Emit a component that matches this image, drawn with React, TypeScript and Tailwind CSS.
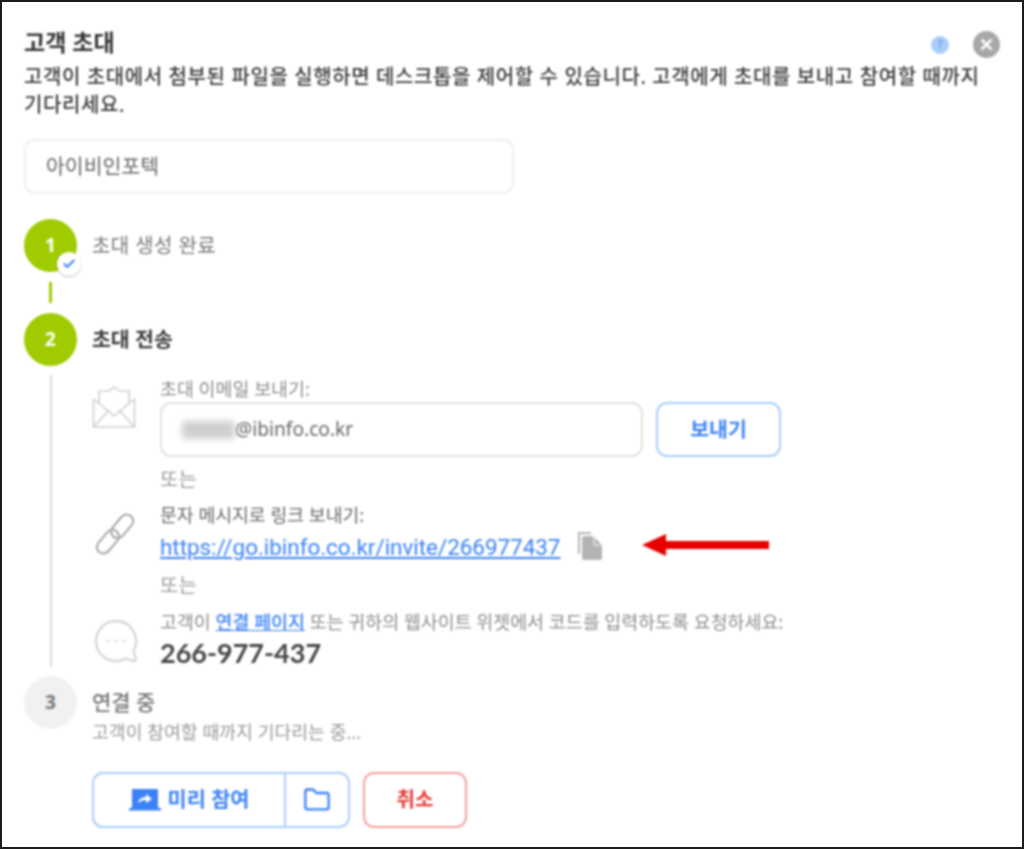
import { Check, Folder, MessageCircleMore, X } from "lucide-react";

const KR = "font-['Noto_Sans','Noto_Sans_CJK_KR',sans-serif]";

function StepCircle({ n, done }: { n: number; done?: boolean }) {
  const pending = n === 3;
  return (
    <div
      className={`relative flex h-[53px] w-[53px] shrink-0 items-center justify-center rounded-full text-[19px] font-bold ${pending ? "bg-[#f1f1f1] text-[#777]" : "bg-[#a0cb00] text-white"}`}
    >
      {n}
      {done && (
        <span className="absolute left-[33px] top-[33px] flex h-[24px] w-[24px] items-center justify-center rounded-full bg-white shadow-[0_1px_2px_rgba(0,0,0,0.25)]">
          <Check className="h-[14px] w-[14px] text-[#3b82f6]" strokeWidth={3.5} />
        </span>
      )}
    </div>
  );
}

function EnvelopeIcon() {
  return (
    <svg width="44" height="44" viewBox="0 0 44 44" fill="none" stroke="#cfcfcf" strokeWidth="1.6" className="mt-[8px] shrink-0">
      <path d="M1.5 14v28h41V14" />
      <path d="M1.5 42 17 25M42.5 42 27 25" />
      <path d="M1.5 14 22 31l20.5-17" />
      <path d="M7 18V6h10l5-4 5 4h10v12" />
    </svg>
  );
}

function ChainIcon() {
  return (
    <svg width="46" height="46" viewBox="0 0 46 46" fill="none" stroke="#a6a6a6" strokeWidth="2" className="mt-[8px] shrink-0">
      <g transform="rotate(-50 23 23)">
        <rect x="-1" y="16" width="27" height="13" rx="6.5" />
        <rect x="20" y="17" width="27" height="13" rx="6.5" />
      </g>
    </svg>
  );
}

function CopyIcon() {
  return (
    <svg width="26" height="29" viewBox="0 0 26 29" className="shrink-0 text-[#b4b4b4]">
      <path d="M1 1h13v2H3v20H1z" fill="currentColor" />
      <path d="M7 5h9l9 9v13a2 2 0 0 1-2 2H7a2 2 0 0 1-2-2V7a2 2 0 0 1 2-2z" fill="currentColor" />
      <path d="M17 5v9h8" fill="none" stroke="#fff" strokeWidth="1" />
    </svg>
  );
}

function LaptopIcon() {
  return (
    <svg width="32" height="24" viewBox="0 0 32 24" className="shrink-0">
      <path d="M4 1h24a1 1 0 0 1 1 1v18H3V2a1 1 0 0 1 1-1z" fill="#3b82f6" />
      <path d="M0 20h32v2.5H0z" fill="#3b82f6" />
      <path d="M9 15c1-4 4-6 8-6V6l6 5-6 4v-3c-3 0-5 1-8 3z" fill="#fff" />
    </svg>
  );
}

export default function App() {
  return (
    <div className={`relative h-[849px] w-[1024px] overflow-hidden border-2 border-[#1c1c1c] bg-white ${KR}`}>
      <div className="blur-[0.9px]">
        <div className="absolute right-[22px] top-[29px] flex items-center gap-[24px]">
          <span className="flex h-[18px] w-[18px] items-center justify-center rounded-full bg-[#a9cdfb] text-[11px] font-bold text-[#6f9fdc]">?</span>
          <span className="flex h-[27px] w-[27px] items-center justify-center rounded-full bg-[#a8a8a8]">
            <X className="h-[17px] w-[17px] text-white" strokeWidth={3.5} />
          </span>
        </div>

        <div className="px-[22px] pt-[24px]">
          <h1 className="text-[23px] font-bold leading-[32px] text-[#333]">고객 초대</h1>
          <p className="mt-[5px] w-[970px] text-[20px] font-medium leading-[28px] tracking-[0.6px] text-[#3a3a3a]">
            고객이 초대에서 첨부된 파일을 실행하면 데스크톱을 제어할 수 있습니다. 고객에게 초대를 보내고 참여할 때까지 기다리세요.
          </p>

          <div className="mt-[20px] flex h-[55px] w-[490px] items-center rounded-[11px] border-2 border-[#efefef] px-[20px] text-[20.5px] text-[#666]">
            아이비인포텍
          </div>

          {/* step 1 */}
          <div className="mt-[25px] flex gap-[15px]">
            <StepCircle n={1} done />
            <div className="pt-[14px] text-[20px] leading-[26px] tracking-[0.4px] text-[#777]">초대 생성 완료</div>
          </div>
          <div className="ml-[25px] mt-[10px] h-[21px] w-[3px] bg-[#a0cb00]" />

          {/* step 2 */}
          <div className="mt-[10px] flex gap-[15px]">
            <div className="flex w-[53px] shrink-0 flex-col items-center">
              <StepCircle n={2} />
              <div className="mb-[4px] mt-[9px] w-[2px] flex-1 bg-[#dcdcdc]" />
            </div>
            <div className="w-[700px]">
              <div className="pt-[13px] text-[20.5px] font-bold leading-[26px] text-[#3a3a3a]">초대 전송</div>

              <div className="mt-[25px] flex">
                <EnvelopeIcon />
                <div className="ml-[24px] flex-1">
                  <div className="text-[18.4px] leading-[24px] text-[#8c8c8c]">초대 이메일 보내기:</div>
                  <div className="mt-[1px] flex gap-[13px]">
                    <div className="flex h-[55px] w-[483px] items-center rounded-[11px] border-2 border-[#e2e2e2] pl-[20px] text-[19.2px] text-[#666]">
                      <span className="h-[18px] w-[53px] rounded-sm bg-[#cfcfcf] blur-[3px]" />
                      @ibinfo.co.kr
                    </div>
                    <button className="flex h-[55px] w-[125px] items-center justify-center rounded-[11px] border-2 border-[#a9cdfb] text-[20.5px] font-bold text-[#3b82f6]">
                      보내기
                    </button>
                  </div>
                  <div className="mt-[11px] text-[20px] leading-[24px] text-[#999]">또는</div>
                </div>
              </div>

              <div className="mt-[11px] flex">
                <ChainIcon />
                <div className="ml-[22px] flex-1">
                  <div className="text-[18.3px] leading-[24px] text-[#666]">문자 메시지로 링크 보내기:</div>
                  <div className="mt-[5px] flex h-[30px] items-center">
                    <a className="w-[401px] whitespace-nowrap font-['Roboto',sans-serif] text-[22.4px] leading-[30px] text-[#3b82f6] underline">
                      https://go.ibinfo.co.kr/invite/266977437
                    </a>
                    <span className="mb-[4px] ml-[16px]"><CopyIcon /></span>
                    <span className="mb-[4px] ml-[39px] flex items-center">
                      <span className="h-0 w-0 border-y-[11px] border-r-[24px] border-y-transparent border-r-[#e60000]" />
                      <span className="h-[8px] w-[103px] bg-[#e60000]" />
                    </span>
                  </div>
                  <div className="mt-[12px] text-[20px] leading-[24px] text-[#999]">또는</div>
                </div>
              </div>

              <div className="mt-[12px] flex">
                <MessageCircleMore className="mt-[7px] h-[48px] w-[48px] shrink-0 -scale-x-100 text-[#d6d6d6]" strokeWidth={1.2} />
                <div className="ml-[20px] flex-1 whitespace-nowrap">
                  <div className="text-[18.4px] leading-[24px] text-[#8c8c8c]">
                    고객이 <a className="font-medium text-[#3b82f6] underline">연결 페이지</a> 또는 귀하의 웹사이트 위젯에서 코드를 입력하도록 요청하세요:
                  </div>
                  <div className="mt-[1px] font-['Lato',sans-serif] text-[27px] font-bold leading-[36px] text-[#444]">266-977-437</div>
                </div>
              </div>
            </div>
          </div>

          {/* step 3 */}
          <div className="mt-[5px] flex gap-[15px]">
            <StepCircle n={3} />
            <div className="pt-[12px]">
              <div className="text-[21px] font-medium leading-[28px] text-[#777]">연결 중</div>
              <div className="mt-[4px] text-[18.3px] leading-[24px] text-[#999]">고객이 참여할 때까지 기다리는 중...</div>
            </div>
          </div>

          {/* actions */}
          <div className="ml-[68px] mt-[28px] flex gap-[13px]">
            <div className="flex h-[56px] w-[258px] rounded-[11px] border-2 border-[#a9cdfb] text-[20.8px] font-bold text-[#3b82f6]">
              <button className="flex w-[192px] items-center justify-center gap-[7px] border-r-2 border-[#a9cdfb]">
                <LaptopIcon />
                미리 참여
              </button>
              <button className="flex flex-1 items-center justify-center">
                <Folder className="h-[28px] w-[28px]" strokeWidth={2} />
              </button>
            </div>
            <button className="h-[56px] w-[104px] rounded-[11px] border-2 border-[#f2a0a0] text-[20px] font-bold text-[#e53935]">취소</button>
          </div>
        </div>
      </div>
    </div>
  );
}
